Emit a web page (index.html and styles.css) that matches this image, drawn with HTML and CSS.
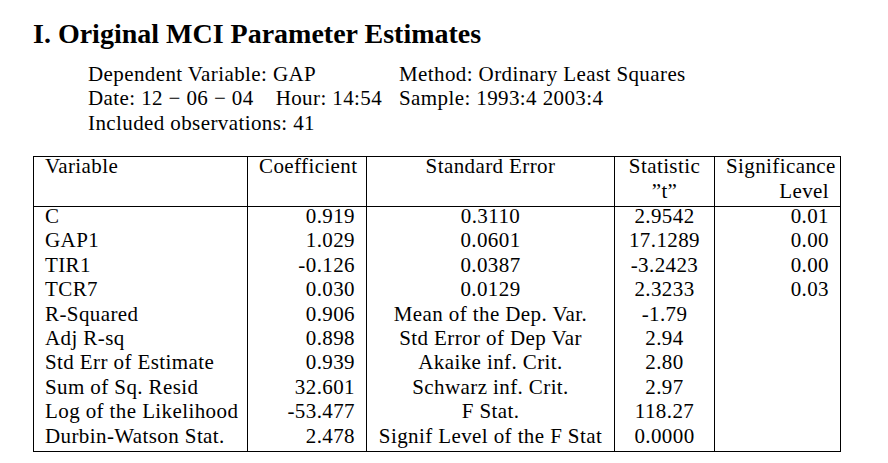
FILE: index.html
```html
<!DOCTYPE html>
<html>
<head>
<meta charset="utf-8">
<link rel="stylesheet" href="styles.css">
</head>
<body>
<main class="page">
  <h1 class="title">I. Original MCI Parameter Estimates</h1>
  <div class="info">
    <div>Dependent Variable: GAP</div>
    <div>Method: Ordinary Least Squares</div>
    <div class="date"><span>Date: 12 − 06 − 04</span><span>Hour: 14:54</span></div>
    <div>Sample: 1993:4 2003:4</div>
    <div class="full">Included observations: 41</div>
  </div>
  <table class="est">
    <colgroup>
      <col class="c-var"><col class="c-coef"><col class="c-se"><col class="c-stat"><col class="c-sig">
    </colgroup>
    <thead>
      <tr><th class="l">Variable</th><th class="r">Coefficient</th><th class="c">Standard Error</th><th class="c">Statistic</th><th class="r">Significance</th></tr>
      <tr class="head-end"><th></th><th></th><th></th><th class="c">”t”</th><th class="r">Level</th></tr>
    </thead>
    <tbody>
      <tr><td class="l">C</td><td class="r">0.919</td><td class="c">0.3110</td><td class="c">2.9542</td><td class="r">0.01</td></tr>
      <tr><td class="l">GAP1</td><td class="r">1.029</td><td class="c">0.0601</td><td class="c">17.1289</td><td class="r">0.00</td></tr>
      <tr><td class="l">TIR1</td><td class="r">-0.126</td><td class="c">0.0387</td><td class="c">-3.2423</td><td class="r">0.00</td></tr>
      <tr><td class="l">TCR7</td><td class="r">0.030</td><td class="c">0.0129</td><td class="c">2.3233</td><td class="r">0.03</td></tr>
      <tr><td class="l">R-Squared</td><td class="r">0.906</td><td class="c">Mean of the Dep. Var.</td><td class="c">-1.79</td><td class="r"></td></tr>
      <tr><td class="l">Adj R-sq</td><td class="r">0.898</td><td class="c">Std Error of Dep Var</td><td class="c">2.94</td><td class="r"></td></tr>
      <tr><td class="l">Std Err of Estimate</td><td class="r">0.939</td><td class="c">Akaike inf. Crit.</td><td class="c">2.80</td><td class="r"></td></tr>
      <tr><td class="l">Sum of Sq. Resid</td><td class="r">32.601</td><td class="c">Schwarz inf. Crit.</td><td class="c">2.97</td><td class="r"></td></tr>
      <tr><td class="l">Log of the Likelihood</td><td class="r">-53.477</td><td class="c">F Stat.</td><td class="c">118.27</td><td class="r"></td></tr>
      <tr><td class="l">Durbin-Watson Stat.</td><td class="r">2.478</td><td class="c">Signif Level of the F Stat</td><td class="c">0.0000</td><td class="r"></td></tr>
    </tbody>
  </table>
</main>
</body>
</html>
```

FILE: styles.css
```css
html, body {
  margin: 0;
  padding: 0;
  background: #ffffff;
  color: #000000;
  font-family: "Liberation Serif", "Times New Roman", serif;
}

.page {
  padding: 20px 0 0 33px;
}

.title {
  margin: 0;
  font-size: 28px;
  line-height: 28px;
  font-weight: bold;
}

.info {
  margin: 14px 0 0 55px;
  display: grid;
  grid-template-columns: 311px auto;
  font-size: 21px;
  line-height: 24.4px;
  letter-spacing: 0.4px;
  white-space: nowrap;
}

.info .full {
  grid-column: 1 / -1;
}

.info .date {
  display: flex;
  gap: 22px;
}

.est {
  margin-top: 21px;
  border-collapse: collapse;
  table-layout: fixed;
  width: 807px;
  font-size: 21px;
  letter-spacing: 0.4px;
  border: 1px solid #000;
}

.c-var { width: 214px; }
.c-coef { width: 119px; }
.c-se { width: 248px; }
.c-stat { width: 100px; }
.c-sig { width: 126px; }

.est th,
.est td {
  padding: 1px 11px 5.55px;
  line-height: 17.85px;
  font-weight: normal;
  white-space: nowrap;
  border-left: 1px solid #000;
  border-right: 1px solid #000;
}

.est .head-end th {
  border-bottom: 1px solid #000;
}

.est .l { text-align: left; }
.est .r { text-align: right; }
.est .c { text-align: center; }
```
